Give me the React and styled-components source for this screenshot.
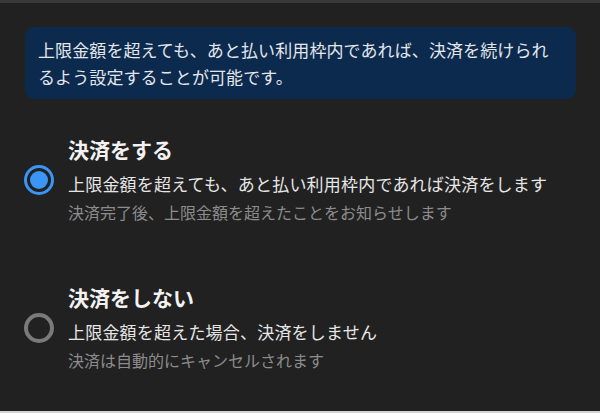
import React from "react";
import styled, { createGlobalStyle } from "styled-components";

const Global = createGlobalStyle`
  html, body { margin: 0; padding: 0; background: #212121; }
  body { font-family: "Noto Sans CJK JP", "Noto Sans", sans-serif; }
`;

const Page = styled.div`
  width: 600px;
  height: 413px;
  background: #212121;
  display: flex;
  flex-direction: column;
  overflow: hidden;
  border-top: 3px solid #393939;
  border-bottom: 2px solid #d4d4d4;
  box-sizing: border-box;
`;

const Notice = styled.div`
  margin: 24px 24px 0 25px;
  padding: 9px 24px 9px 13px;
  background: #0b2a4e;
  border-radius: 9px;
  color: #e4e6ea;
  font-size: 17px;
  letter-spacing: 0.1px;
  line-height: 27px;
`;

const Options = styled.div`
  display: flex;
  flex-direction: column;
  gap: 60px;
  margin-top: 35px;
`;

const Option = styled.div`
  display: flex;
  align-items: center;
  gap: 14px;
  padding-left: 24px;
`;

const Radio = styled.span`
  width: 30px;
  height: 30px;
  box-sizing: border-box;
  border-radius: 50%;
  border: ${(p) => (p.$checked ? "3px solid #3a95f6" : "4px solid #7a7a7a")};
  display: flex;
  align-items: center;
  justify-content: center;
  flex: none;
  margin-top: 4px;
  &::after {
    content: "";
    width: 18px;
    height: 18px;
    border-radius: 50%;
    background: ${(p) => (p.$checked ? "#3a95f6" : "transparent")};
  }
`;

const Texts = styled.div`
  display: flex;
  flex-direction: column;
`;

const Title = styled.div`
  color: #f2f2f2;
  font-size: 21px;
  font-weight: 700;
  line-height: 30px;
  margin-bottom: 1px;
`;

const Desc = styled.div`
  color: #e6e6e6;
  font-size: 17px;
  letter-spacing: 0.2px;
  line-height: 37px;
`;

const Note = styled.div`
  color: #8c8c8c;
  font-size: 16px;
  line-height: 20px;
`;

const items = [
  {
    title: "決済をする",
    desc: "上限金額を超えても、あと払い利用枠内であれば決済をします",
    note: "決済完了後、上限金額を超えたことをお知らせします",
    checked: true,
  },
  {
    title: "決済をしない",
    desc: "上限金額を超えた場合、決済をしません",
    note: "決済は自動的にキャンセルされます",
    checked: false,
  },
];

export default function App() {
  return (
    <>
      <Global />
      <Page>
        <Notice>
          上限金額を超えても、あと払い利用枠内であれば、決済を続けられるよう設定することが可能です。
        </Notice>
        <Options>
          {items.map((it) => (
            <Option key={it.title}>
              <Radio $checked={it.checked} />
              <Texts>
                <Title>{it.title}</Title>
                <Desc>{it.desc}</Desc>
                <Note>{it.note}</Note>
              </Texts>
            </Option>
          ))}
        </Options>
      </Page>
    </>
  );
}
